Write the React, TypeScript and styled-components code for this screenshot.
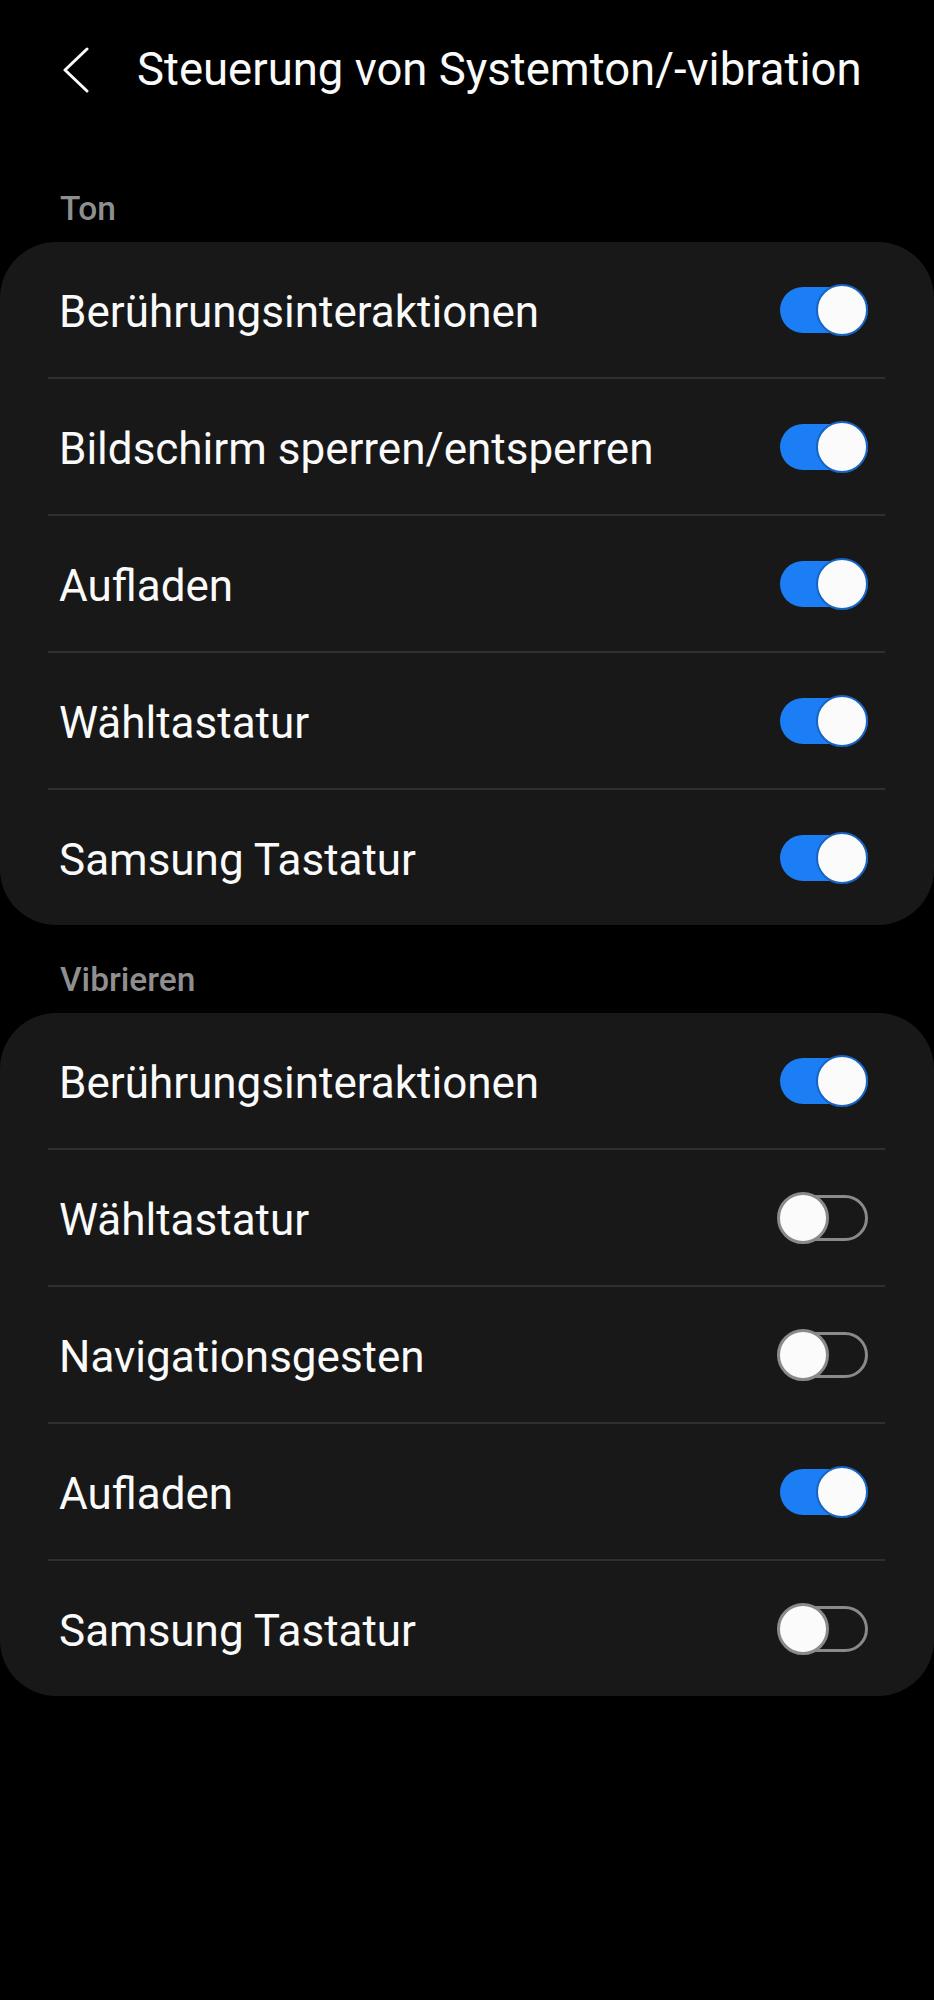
import React from 'react';
import styled, { createGlobalStyle } from 'styled-components';

const GlobalStyle = createGlobalStyle`
  html, body {
    margin: 0;
    padding: 0;
    background: #000;
  }
  body {
    font-family: Roboto, 'Noto Sans', 'Liberation Sans', sans-serif;
    color: #fafafa;
  }
`;

const Page = styled.div`
  width: 934px;
  min-height: 2000px;
  background: #000;
`;

const Header = styled.header`
  height: 140px;
  display: flex;
  align-items: center;
  padding-left: 62px;
  gap: 47px;
`;

const BackIcon = styled.svg`
  width: 28px;
  height: 46px;
  flex: none;
`;

const Title = styled.h1`
  margin: 0;
  font-size: 45.5px;
  line-height: 54px;
  font-weight: 400;
  color: #fafafa;
`;

const SectionLabel = styled.div<{ $first?: boolean }>`
  padding: ${(p) => (p.$first ? '49px' : '35px')} 60px 13px;
  font-size: 33.5px;
  line-height: 40px;
  font-weight: 500;
  color: #8f8f8f;
`;

const Card = styled.section`
  background: #181818;
  border-radius: 56px;
  overflow: hidden;
`;

const Row = styled.div`
  height: 135px;
  display: flex;
  align-items: center;
  justify-content: space-between;
  padding: 0 66px 0 59px;
`;

const Label = styled.span`
  padding-top: 5px;
  font-size: 44px;
  line-height: 50px;
  font-weight: 400;
  color: #fafafa;
`;

const Divider = styled.div`
  height: 2px;
  margin: 0 49px 0 48px;
  background: #2f2f2f;
`;

const Switch = styled.div`
  position: relative;
  width: 91px;
  height: 52px;
  flex: none;
`;

const Track = styled.div<{ $on: boolean }>`
  position: absolute;
  top: 3px;
  right: 0;
  width: 88px;
  height: 46px;
  box-sizing: border-box;
  border-radius: 23px;
  background: ${(p) => (p.$on ? '#1b7ef4' : 'transparent')};
  border: ${(p) => (p.$on ? 'none' : '3px solid #8a8a8a')};
`;

const Thumb = styled.div<{ $on: boolean }>`
  position: absolute;
  top: 0;
  ${(p) => (p.$on ? 'right: 0;' : 'left: 0;')}
  width: 52px;
  height: 52px;
  box-sizing: border-box;
  border-radius: 50%;
  background: #fbfbfb;
  border: ${(p) => (p.$on ? '2px solid #1764c4' : '3px solid #8a8a8a')};
`;

type Item = { label: string; on: boolean };

const sound: Item[] = [
  { label: 'Berührungsinteraktionen', on: true },
  { label: 'Bildschirm sperren/entsperren', on: true },
  { label: 'Aufladen', on: true },
  { label: 'Wähltastatur', on: true },
  { label: 'Samsung Tastatur', on: true },
];

const vibration: Item[] = [
  { label: 'Berührungsinteraktionen', on: true },
  { label: 'Wähltastatur', on: false },
  { label: 'Navigationsgesten', on: false },
  { label: 'Aufladen', on: true },
  { label: 'Samsung Tastatur', on: false },
];

const Toggle: React.FC<{ on: boolean }> = ({ on }) => (
  <Switch role="switch" aria-checked={on}>
    <Track $on={on} />
    <Thumb $on={on} />
  </Switch>
);

const Group: React.FC<{ items: Item[] }> = ({ items }) => (
  <Card>
    {items.map((item, i) => (
      <React.Fragment key={item.label}>
        {i > 0 && <Divider />}
        <Row>
          <Label>{item.label}</Label>
          <Toggle on={item.on} />
        </Row>
      </React.Fragment>
    ))}
  </Card>
);

const App: React.FC = () => {
  return (
    <Page>
      <GlobalStyle />
      <Header>
        <BackIcon viewBox="0 0 28 46" fill="none">
          <path
            d="M25 2 L3 23 L25 44"
            stroke="#fafafa"
            strokeWidth="3"
            strokeLinecap="round"
            strokeLinejoin="round"
          />
        </BackIcon>
        <Title>Steuerung von Systemton/-vibration</Title>
      </Header>
      <SectionLabel $first>Ton</SectionLabel>
      <Group items={sound} />
      <SectionLabel>Vibrieren</SectionLabel>
      <Group items={vibration} />
    </Page>
  );
};

export default App;
